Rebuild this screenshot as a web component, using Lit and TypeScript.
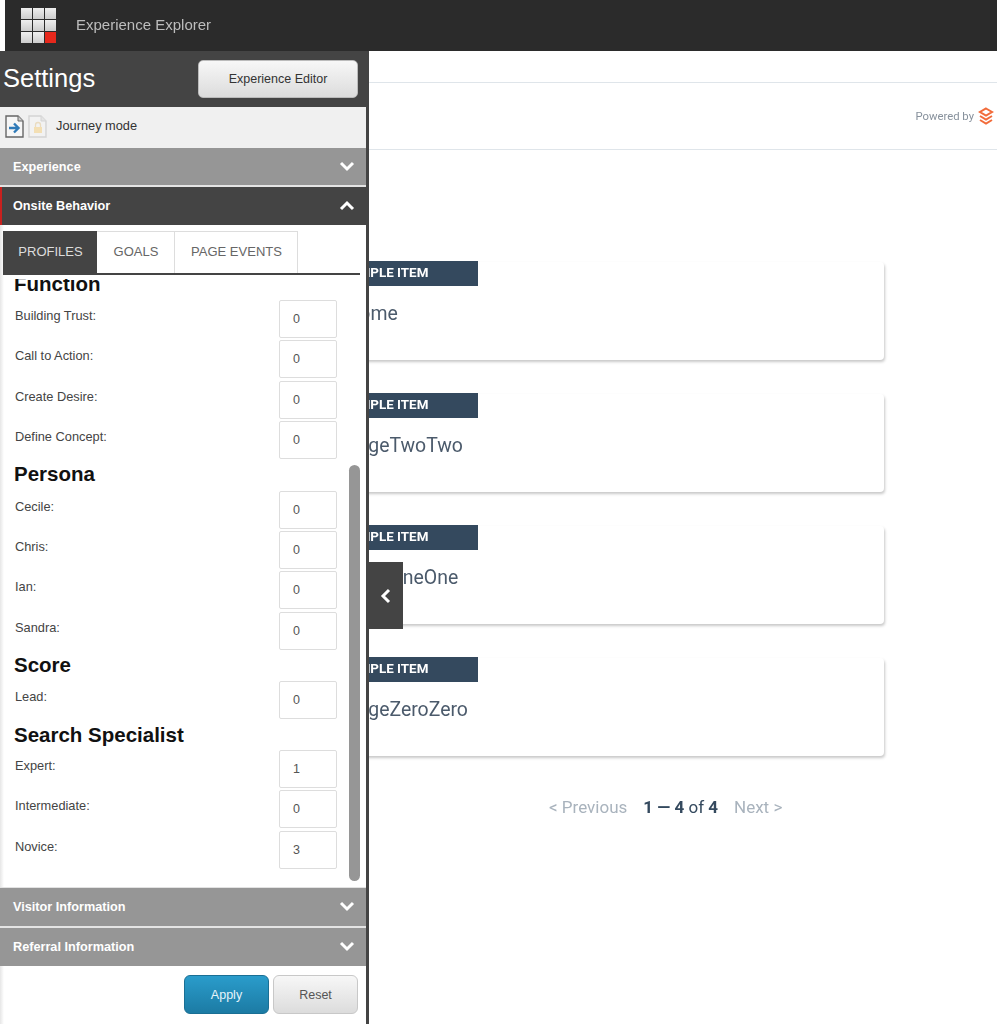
import { LitElement, html, css } from "lit";
import { customElement } from "lit/decorators.js";

const groups: { title: string; rows: [string, string][] }[] = [
  { title: "Function", rows: [["Building Trust:", "0"], ["Call to Action:", "0"], ["Create Desire:", "0"], ["Define Concept:", "0"]] },
  { title: "Persona", rows: [["Cecile:", "0"], ["Chris:", "0"], ["Ian:", "0"], ["Sandra:", "0"]] },
  { title: "Score", rows: [["Lead:", "0"]] },
  { title: "Search Specialist", rows: [["Expert:", "1"], ["Intermediate:", "0"], ["Novice:", "3"]] },
];
const cards = ["Home", "PageTwoTwo", "PageOneOne", "PageZeroZero"];

const chevron = (d: "up" | "down" | "left") => {
  const p = d === "down" ? "M2 4 L8 10 L14 4" : d === "up" ? "M2 11 L8 5 L14 11" : "M10 2 L4 8 L10 14";
  return html`<svg class="chev" width="16" height="16" viewBox="0 0 16 16"><path d="${p}" fill="none" stroke="#fff" stroke-width="3"/></svg>`;
};

@customElement("app-root")
export class AppRoot extends LitElement {
  static styles = css`
    :host { display: block; position: relative; height: 1024px; overflow: hidden; background: #fff; font-family: "Liberation Sans", Arial, sans-serif; }
    .blur { height: 100%; filter: blur(0.5px); }
    .top { height: 51px; margin-left: 5px; background: #2b2b2b; display: flex; align-items: center; gap: 20px; padding-left: 16px; box-sizing: border-box; }
    .top span { color: #bdbdbd; font-size: 15px; padding-bottom: 2px; }
    .grid { display: grid; grid-template-columns: repeat(3, 11px); grid-auto-rows: 11px; gap: 1px; width: 35px; }
    .grid i { background: linear-gradient(#efefef, #cdcdcd); }
    .grid i.red { background: #e6281c; }
    .strip { margin-top: 31px; height: 66px; border-top: 1px solid #dfe5ea; border-bottom: 1px solid #dfe5ea; display: flex; align-items: center; justify-content: flex-end; gap: 4px; padding-right: 3px; font-family: Roboto, sans-serif; font-size: 11.3px; color: #87919c; }
    .list { margin: 112px 0 0 330px; width: 554px; display: flex; flex-direction: column; gap: 34px; font-family: Roboto, sans-serif; }
    .card { height: 98px; border-radius: 4px; box-shadow: 1px 2px 3px rgba(0,0,0,.22); background: #fff; }
    .tag { display: inline-block; margin-top: -1px; height: 25px; line-height: 24px; padding: 0 50px 0 11.4px; background: #34495e; color: #fff; font-size: 13.4px; font-weight: 700; }
    .ttl { margin: 13px 0 0 15.5px; font-size: 19.44px; line-height: 30px; color: #4b5a6b; }
    .pager { margin: 39.5px 0 0 549px; display: flex; gap: 16px; font-family: Roboto, sans-serif; font-size: 17px; line-height: 22px; color: #a9b3bd; white-space: nowrap; }
    .pager b { font-weight: 700; color: #34495e; }
    .pager .cur { color: #34495e; }

    .panel { position: absolute; left: 0; top: 51px; bottom: 0; width: 369px; box-sizing: border-box; border-right: 3px solid #444; background: linear-gradient(90deg, #e6e6e6, #fff 4px); display: flex; flex-direction: column; }
    .head { height: 56px; flex: none; background: #444; display: flex; align-items: center; justify-content: space-between; padding: 0 11px 0 3px; box-sizing: border-box; color: #fff; font-size: 25.5px; margin-right: -3px; }
    .head span { padding-bottom: 2px; }
    .btn { box-sizing: border-box; border: 1px solid #ccc; border-radius: 5px; background: linear-gradient(#f7f7f7, #dcdcdc); color: #333; font: 12.5px "Liberation Sans", Arial, sans-serif; display: flex; align-items: center; justify-content: center; }
    .head .btn { width: 160px; height: 38px; border-color: #bbb; margin-top: -1px; }
    .journey { height: 41px; flex: none; background: #f0f0f0; display: flex; align-items: center; padding: 0 0 3px 5px; font-size: 12.8px; color: #333; box-sizing: border-box; }
    .journey svg { margin-right: 4px; }
    .journey span { margin-left: 5px; padding-bottom: 2px; }
    .sec { height: 39px; flex: none; box-sizing: border-box; display: flex; align-items: center; justify-content: space-between; padding: 0 11px 0 13px; background: #969696; border-bottom: 2px solid #e4e4e4; color: #fff; font-size: 12.7px; font-weight: 700; }
    .sec.open { height: 38px; background: #444; border-bottom: 0; border-left: 2px solid #c9211e; padding-left: 11px; margin-right: -3px; padding-right: 14px; }
    .sec.vis { height: 40px; }
    .sec.ref { height: 38px; border-bottom: 0; }
    .tabs { margin: 6px 0 0 3px; width: 357px; height: 44px; flex: none; display: flex; box-sizing: border-box; border-bottom: 2px solid #444; }
    .tab { box-sizing: border-box; display: flex; align-items: center; justify-content: center; padding: 0 0 2px 1px; font-size: 13px; color: #666; border: 1px solid #ddd; border-left: 0; border-bottom: 0; }
    .tab.on { width: 94px; background: #444; color: #ddd; border: 0; }
    .tab.goals { width: 78px; }
    .tab.events { width: 123px; }
    .scroll { position: relative; height: 608px; margin-top: 4px; flex: none; overflow: hidden; border-bottom: 1px solid #e2e2e2; padding-left: 14px; }
    .inner { margin-top: -8.3px; }
    h3 { margin: 0; height: 29.3px; line-height: 26px; font-size: 20.5px; font-weight: 700; color: #111; }
    h3.last { height: 28.6px; }
    .row { height: 38px; margin-bottom: 2.33px; display: flex; justify-content: space-between; padding-right: 29px; font-size: 12.8px; color: #444; line-height: 31px; }
    .row label { padding-left: 1px; }
    .val { box-sizing: border-box; width: 58px; height: 38px; border: 1px solid #ddd; border-radius: 2px; padding-left: 13px; line-height: 36px; font-size: 12.5px; color: #555; }
    .bar { position: absolute; left: 349px; top: 186px; width: 11px; height: 416px; border-radius: 6px; background: #969696; }
    .foot { flex: 1; display: flex; justify-content: flex-end; gap: 4px; padding: 9px 8px 0 0; align-items: flex-start; }
    .foot .btn { width: 85px; height: 39px; border-radius: 6px; color: #555; border-color: #c8c8c8; }
    .foot .apply { background: linear-gradient(#2a9ccb, #1c7ba4); color: #e8f4fa; border-color: #1a6f94; }
    .collapse { position: absolute; left: 366px; top: 562px; width: 37px; height: 67px; background: #444; display: flex; align-items: center; justify-content: center; padding-left: 5px; box-sizing: border-box; }
  `;

  render() {
    return html`<div class="blur">
      <div class="top">
        <div class="grid">${Array.from({ length: 9 }, (_, i) => html`<i class="${i === 8 ? "red" : ""}"></i>`)}</div>
        <span>Experience Explorer</span>
      </div>
      <div class="strip">
        <span>Powered by</span>
        <svg width="16" height="19" viewBox="0 0 16 19" fill="none" stroke="#f26b3a" stroke-width="2">
          <path d="M8 1.5 L14 5 L8 8.5 L2 5 Z"/>
          <path d="M2 9 L8 12.5 L14 9"/>
          <path d="M2 13 L8 16.5 L14 13"/>
        </svg>
      </div>
      <div class="list">
        ${cards.map((c) => html`<div class="card"><div class="tag">SAMPLE ITEM</div><div class="ttl">${c}</div></div>`)}
      </div>
      <div class="pager">
        <span>&lt; Previous</span>
        <span class="cur"><b>1 — 4</b> of <b>4</b></span>
        <span>Next &gt;</span>
      </div>
      <div class="panel">
        <div class="head"><span>Settings</span><div class="btn">Experience Editor</div></div>
        <div class="journey">
          <svg width="19" height="23" viewBox="0 0 19 23">
            <path d="M1 1 H13 L18 6 V22 H1 Z" fill="#f6f6f6" stroke="#666" stroke-width="1.4"/>
            <path d="M13 1 V6 H18" fill="#ccc" stroke="#666"/>
            <path d="M4 13 H13 M9 8.5 L13.5 13 L9 17.5" fill="none" stroke="#2f7ab8" stroke-width="2.4"/>
          </svg>
          <svg width="19" height="23" viewBox="0 0 19 23">
            <path d="M1 1 H13 L18 6 V22 H1 Z" fill="#f2f2f2" stroke="#d4d4d4" stroke-width="1.4"/>
            <path d="M13 1 V6 H18" fill="#e4e4e4" stroke="#d4d4d4"/>
            <rect x="6" y="12" width="8" height="6" fill="#f3dfb4"/>
            <path d="M7.5 12 V10 a2.5 2.5 0 0 1 5 0 V12" fill="none" stroke="#eadcc0" stroke-width="1.3"/>
          </svg>
          <span>Journey mode</span>
        </div>
        <div class="sec"><span>Experience</span>${chevron("down")}</div>
        <div class="sec open"><span>Onsite Behavior</span>${chevron("up")}</div>
        <div class="tabs">
          <div class="tab on">PROFILES</div>
          <div class="tab goals">GOALS</div>
          <div class="tab events">PAGE EVENTS</div>
        </div>
        <div class="scroll">
          <div class="inner">
            ${groups.map((g, i) => html`<h3 class="${i === groups.length - 1 ? "last" : ""}">${g.title}</h3>${g.rows.map(([l, v]) => html`<div class="row"><label>${l}</label><div class="val">${v}</div></div>`)}`)}
          </div>
          <div class="bar"></div>
        </div>
        <div class="sec vis"><span>Visitor Information</span>${chevron("down")}</div>
        <div class="sec ref"><span>Referral Information</span>${chevron("down")}</div>
        <div class="foot"><div class="btn apply">Apply</div><div class="btn">Reset</div></div>
      </div>
      <div class="collapse">${chevron("left")}</div>
    </div></div>`;
  }
}
